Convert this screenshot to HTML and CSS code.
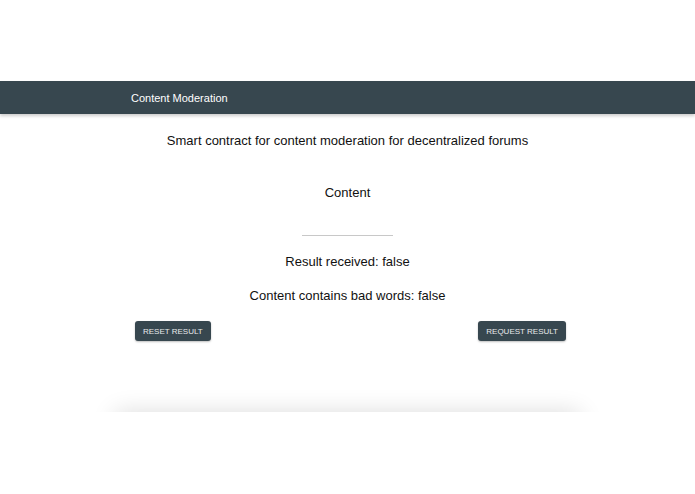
FILE: index.html
```html
<!DOCTYPE html>
<html lang="en">
<head>
  <meta charset="UTF-8" />
  <title>Content Moderation</title>
  <link rel="stylesheet" href="styles.css">
</head>
<body>
  <div class="toolbar">
    <span class="toolbar-title">Content Moderation</span>
  </div>

  <div class="main">
    <h1 class="heading">Smart contract for content moderation for decentralized forums</h1>
    <p class="label">Content</p>
    <input class="field" type="text">
    <p class="status">Result received: false</p>
    <p class="status">Content contains bad words: false</p>

    <div class="actions">
      <button class="btn">Reset result</button>
      <button class="btn">Request result</button>
    </div>
  </div>

  <!-- card below the fold, only its shadow shows -->
  <div class="fold">
    <div class="card"></div>
  </div>
</body>
</html>
```

FILE: styles.css
```css
* {
  box-sizing: border-box;
}

body {
  margin: 0;
  padding-top: 81px;
  background: #fff;
  font-family: 'Liberation Sans', Arial, sans-serif;
  color: #111;
}

.toolbar {
  height: 33px;
  background: #37474f;
  box-shadow: 0 2px 3px rgba(0, 0, 0, 0.2);
  padding-left: 131px;
  display: flex;
  align-items: center;
}

.toolbar-title {
  color: #fff;
  font-size: 11px;
}

.main {
  display: flex;
  flex-direction: column;
  align-items: center;
  text-align: center;
}

.heading {
  font-size: 13px;
  font-weight: normal;
  margin: 19px 0 0;
}

.label {
  font-size: 13px;
  margin: 37px 0 0;
}

.field {
  width: 91px;
  border: none;
  border-bottom: 1px solid #c8c8c8;
  margin-top: 28px;
  padding: 0;
  height: 8px;
  outline: none;
}

.status {
  font-size: 13px;
  margin: 18px 0 0;
}

.status + .status {
  margin-top: 19px;
}

.actions {
  align-self: stretch;
  display: flex;
  justify-content: space-between;
  padding: 0 129px 0 135px;
  margin-top: 18px;
}

.btn {
  height: 20px;
  padding: 0 8px;
  background: #37474f;
  color: #e8eaeb;
  border: none;
  border-radius: 3px;
  box-shadow: 0 1px 2px rgba(0, 0, 0, 0.25);
  font-family: 'Liberation Sans', Arial, sans-serif;
  font-size: 8px;
  text-transform: uppercase;
  cursor: pointer;
}

.fold {
  margin-top: 31px;
  height: 40px;
  overflow: hidden;
  padding: 0 115px;
}

.card {
  margin-top: 40px;
  height: 60px;
  background: #fff;
  box-shadow: 0 0 24px rgba(0, 0, 0, 0.14);
}
```
